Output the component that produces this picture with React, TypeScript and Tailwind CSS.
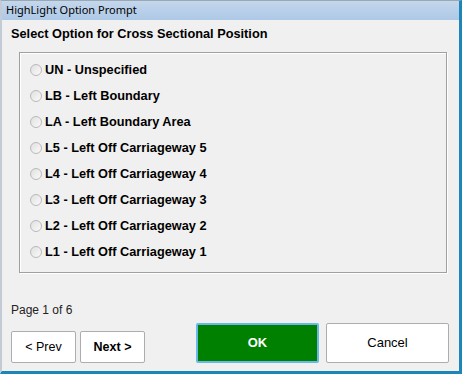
import React from 'react'

const options = [
  'UN - Unspecified',
  'LB - Left Boundary',
  'LA - Left Boundary Area',
  'L5 - Left Off Carriageway 5',
  'L4 - Left Off Carriageway 4',
  'L3 - Left Off Carriageway 3',
  'L2 - Left Off Carriageway 2',
  'L1 - Left Off Carriageway 1',
]

function Radio() {
  return (
    <span className="w-[12px] h-[12px] rounded-full border border-[#b9b9b9] bg-gradient-to-br from-[#e0e0e0] to-[#fafafa] shrink-0" />
  )
}

export default function App() {
  return (
    <div
      className="w-[462px] h-[374px] flex flex-col bg-[#f0f0f0] border-l-2 border-l-[#c3ccd6] border-t border-t-[#9aa8b6] border-r-[3px] border-r-[#1c86b7] border-b-[3px] border-b-[#1c86b7] overflow-hidden"
      style={{ fontFamily: '"Liberation Sans", Arial, sans-serif' }}
    >
      <div
        className="h-[19px] flex items-center pl-[4px] bg-gradient-to-b from-[#c4d7ec] to-[#adc8e6] text-[11px] text-black"
        style={{ fontFamily: '"Noto Sans", "Liberation Sans", sans-serif' }}
      >
        HighLight Option Prompt
      </div>

      <div className="flex flex-col pl-[9px]">
        <div className="mt-[6px] text-[12.75px] leading-[16px] font-bold text-black">
          Select Option for Cross Sectional Position
        </div>

        <div className="mt-[10px] ml-[8px] w-[428px] h-[221px] border border-[#a0a0a0] shadow-[inset_1px_1px_0_#fff,1px_1px_0_#fff] pt-[4px] pl-[10px]">
          {options.map((o) => (
            <div key={o} className="h-[26px] flex items-center gap-[3px]">
              <Radio />
              <span className="text-[12.75px] font-bold text-black">{o}</span>
            </div>
          ))}
        </div>

        <div className="mt-[29px] text-[12px] leading-[16px] text-[#222]">Page 1 of 6</div>

        <div className="mt-[5px] flex items-end">
          <button className="w-[65px] h-[32px] bg-white border border-[#adadad] rounded-[2px] text-[12.5px] text-black">
            &lt; Prev
          </button>
          <button className="ml-[4px] w-[65px] h-[32px] bg-white border border-[#adadad] rounded-[2px] text-[12.5px] font-bold text-black">
            Next &gt;
          </button>
          <button className="ml-[51px] w-[123px] h-[40px] bg-[#008000] border-2 border-[#6bb8e8] rounded-[2px] text-[13px] font-bold text-white">
            OK
          </button>
          <button className="ml-[7px] w-[123px] h-[40px] bg-white border border-[#adadad] rounded-[2px] text-[13px] text-black">
            Cancel
          </button>
        </div>
      </div>
    </div>
  )
}
